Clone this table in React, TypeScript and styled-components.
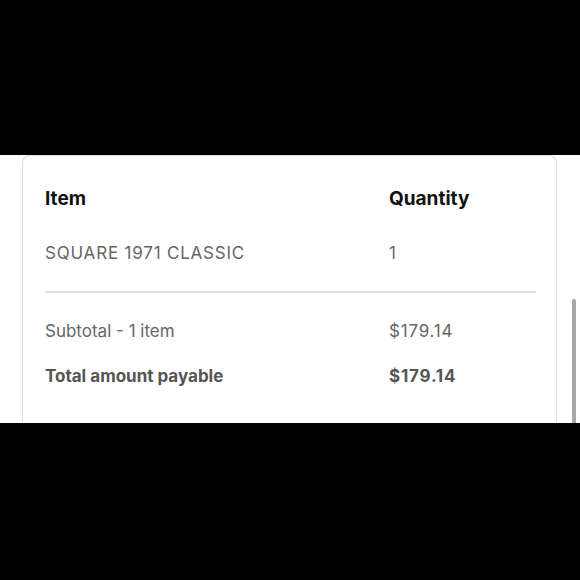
import React from "react";
import styled, { createGlobalStyle } from "styled-components";

const GlobalStyle = createGlobalStyle`
  html, body {
    margin: 0;
    padding: 0;
    background: #000;
  }
  body {
    font-family: Inter, "Noto Sans", "Liberation Sans", sans-serif;
  }
`;

interface summaryLine {
  label: string;
  value: string;
  strong?: boolean;
}

const SUMMARY: summaryLine[] = [
  { label: "Subtotal - 1 item", value: "$179.14" },
  { label: "Total amount payable", value: "$179.14", strong: true },
];

const App = () => {
  return (
    <>
      <GlobalStyle />
      <Page>
        <Viewport>
          <CardArea>
            <Card>
              <Grid>
                <HeadCell>Item</HeadCell>
                <HeadCell>Quantity</HeadCell>
              </Grid>
              <Grid $top={30}>
                <ProductName>SQUARE 1971 CLASSIC</ProductName>
                <Cell>1</Cell>
              </Grid>
              <Divider />
              {SUMMARY.map((line, i) => (
                <Grid key={line.label} $top={i === 0 ? 26 : 21}>
                  <Cell $strong={line.strong}>{line.label}</Cell>
                  <Amount $strong={line.strong}>{line.value}</Amount>
                </Grid>
              ))}
            </Card>
          </CardArea>
          <Track>
            <Thumb />
          </Track>
        </Viewport>
      </Page>
    </>
  );
};

const Page = styled.div`
  width: 580px;
  height: 580px;
  padding-top: 155px;
  box-sizing: border-box;
`;

const Viewport = styled.div`
  display: flex;
  height: 268px;
  background: #fff;
  overflow: hidden;
`;

const CardArea = styled.div`
  flex: 1;
  padding-left: 22px;
`;

const Card = styled.div`
  width: 535px;
  min-height: 300px;
  box-sizing: border-box;
  border: 1px solid #dcdcdc;
  border-bottom: none;
  border-radius: 8px 8px 0 0;
  padding: 31px 20px 0 22px;
`;

const Grid = styled.div<{ $top?: number }>`
  display: grid;
  grid-template-columns: 1fr 147px;
  margin-top: ${(p) => p.$top ?? 0}px;
`;

const HeadCell = styled.div`
  font-size: 19px;
  line-height: 24px;
  font-weight: 700;
  color: #111;
`;

const Cell = styled.div<{ $strong?: boolean }>`
  font-size: 17px;
  line-height: 24px;
  font-weight: ${(p) => (p.$strong ? 700 : 400)};
  color: ${(p) => (p.$strong ? "#555" : "#666")};
`;

const ProductName = styled(Cell)`
  letter-spacing: 0.8px;
`;

const Amount = styled(Cell)`
  letter-spacing: 0.8px;
`;

const Divider = styled.hr`
  border: none;
  border-top: 2px solid #dedede;
  margin: 26px 0 0;
`;

const Track = styled.div`
  width: 23px;
  padding-left: 15px;
  box-sizing: border-box;
`;

const Thumb = styled.div`
  width: 4px;
  height: 200px;
  margin-top: 144px;
  border-radius: 2px;
  background: #a8a8a8;
`;

export default App;
